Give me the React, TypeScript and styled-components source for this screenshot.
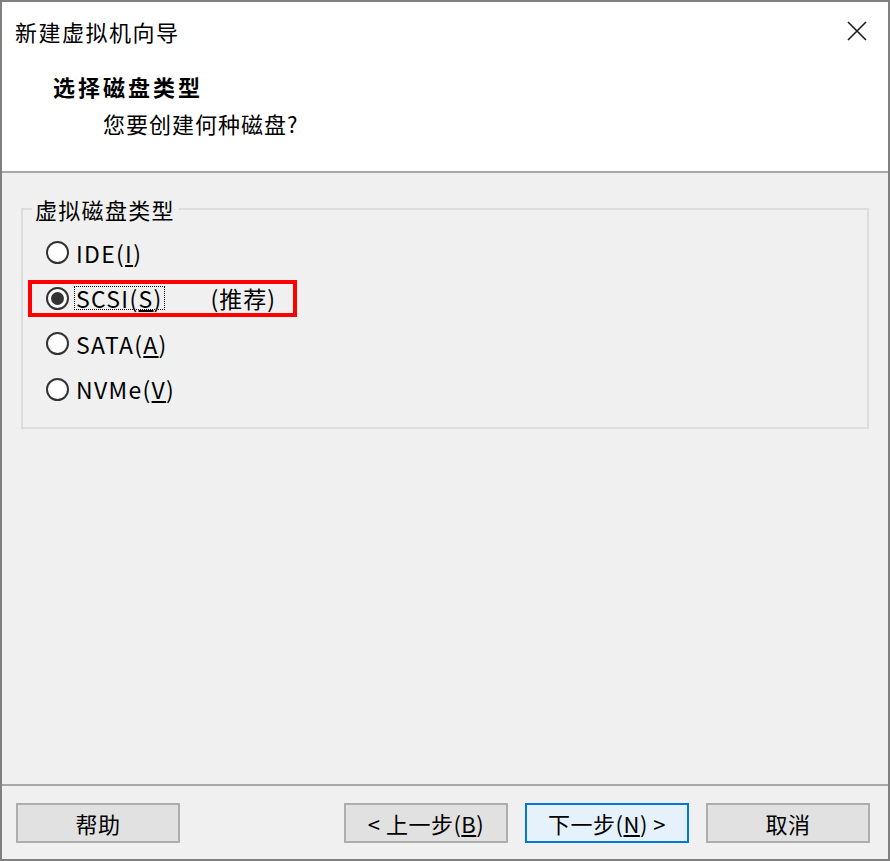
import React from 'react';
import styled, { createGlobalStyle } from 'styled-components';

const GlobalStyle = createGlobalStyle`
    html, body {
        margin: 0;
        padding: 0;
        background: #ffffff;
    }

    *, *::before, *::after {
        box-sizing: border-box;
    }
`;

const fontStack = `"Noto Sans CJK SC", "Noto Sans", sans-serif`;

    // Window frame
const StyledWindow = styled.div`
    display: flex;
    flex-direction: column;
    width: 890px;
    height: 861px;
    border: 2px solid #808080;
    font-family: ${fontStack};
    font-size: 22px;
    color: #000;
    background: #f0f0f0;
`;

const StyledHeader = styled.header`
    display: flex;
    flex-direction: column;
    height: 171px;
    background: #ffffff;
    border-bottom: 2px solid #a8a8a8;
`;

const StyledTitleBar = styled.div`
    display: flex;
    align-items: center;
    justify-content: space-between;
    height: 58px;
    padding: 0 16px 0 13px;
`;

const StyledTitle = styled.span`
    font-size: 22px;
    letter-spacing: 1.5px;
`;

const StyledCloseButton = styled.button`
    display: flex;
    align-items: center;
    justify-content: center;
    width: 30px;
    height: 30px;
    padding: 0;
    border: none;
    background: transparent;
    cursor: pointer;
`;

const StyledHeading = styled.h1`
    margin: 11px 0 0 51px;
    font-size: 22px;
    font-weight: 700;
    line-height: 30px;
    letter-spacing: 3px;
`;

const StyledSubHeading = styled.p`
    margin: 7px 0 0 101px;
    font-size: 22px;
    line-height: 30px;
    letter-spacing: 1px;
`;

    // Body
const StyledBody = styled.main`
    flex: 1;
    padding: 21px 19px 0 19px;
    border-bottom: 2px solid #a8a8a8;
`;

const StyledGroup = styled.fieldset`
    margin: 0;
    height: 235px;
    padding: 6px 0 0 23px;
    border: 2px solid #dcdcdc;
    display: flex;
    flex-direction: column;
`;

const StyledLegend = styled.legend`
    padding: 0 4px 0 3px;
    margin-left: -14px;
    font-size: 22px;
    line-height: 30px;
    letter-spacing: 1.3px;
`;

interface RadioRowProps {
    highlighted?: boolean
}

const StyledRadioRow = styled.label<RadioRowProps>`
    position: relative;
    display: flex;
    align-items: center;
    height: 45.5px;
    cursor: pointer;

    ${({highlighted}) => highlighted ? `
        &::after {
            content: '';
            position: absolute;
            left: -18px;
            top: 4px;
            width: 269px;
            height: 37px;
            border: 4px solid #ff0000;
            pointer-events: none;
        }
    ` : ''}
`;

interface RadioCircleProps {
    checked?: boolean
}

const StyledRadioCircle = styled.span<RadioCircleProps>`
    display: flex;
    align-items: center;
    justify-content: center;
    width: 23px;
    height: 23px;
    border: 2px solid #333333;
    border-radius: 50%;
    background: #ffffff;
    flex-shrink: 0;

    &::before {
        content: '';
        display: ${({checked}) => checked ? 'block' : 'none'};
        width: 13px;
        height: 13px;
        border-radius: 50%;
        background: #333333;
    }
`;

interface RadioLabelProps {
    focused?: boolean
}

const StyledRadioLabel = styled.span<RadioLabelProps>`
    margin-left: 5px;
    padding: 0 1px;
    font-size: 23px;
    line-height: 22px;
    border: 1px dotted ${({focused}) => focused ? '#000' : 'transparent'};
    letter-spacing: 1.3px;
`;

const StyledRecommend = styled.span`
    margin-left: 46px;
    font-size: 23px;
    letter-spacing: 1px;
`;

    // Footer
const StyledFooter = styled.footer`
    display: flex;
    align-items: center;
    height: 73px;
    padding: 0 18px 0 14px;
`;

const StyledSpacer = styled.div`
    flex: 1;
`;

interface ButtonProps {
    primary?: boolean
}

const StyledButton = styled.button<ButtonProps>`
    width: 164px;
    height: 40px;
    margin-left: ${({primary}) => primary ? '17px' : '0'};
    margin-right: ${({primary}) => primary ? '17px' : '0'};
    padding: 0;
    font-family: ${fontStack};
    font-size: 22px;
    color: #000;
    background: ${({primary}) => primary ? '#e5f1fb' : '#e1e1e1'};
    border: 2px solid ${({primary}) => primary ? '#0078d7' : '#adadad'};
    cursor: pointer;
    letter-spacing: 0.5px;
`;

const radioOptions = [
    { id: 'ide', text: 'IDE(', key: 'I', checked: false },
    { id: 'scsi', text: 'SCSI(', key: 'S', checked: true },
    { id: 'sata', text: 'SATA(', key: 'A', checked: false },
    { id: 'nvme', text: 'NVMe(', key: 'V', checked: false },
];

const CloseIcon = () => (
    <svg width="20" height="20" viewBox="0 0 20 20">
        <path d="M1 1 L19 19 M19 1 L1 19" stroke="#1a1a1a" strokeWidth="1.6" fill="none" />
    </svg>
);

export default function App() {
    return (
        <>
            <GlobalStyle />
            <StyledWindow>
                <StyledHeader>
                    <StyledTitleBar>
                        <StyledTitle>新建虚拟机向导</StyledTitle>
                        <StyledCloseButton aria-label="关闭">
                            <CloseIcon />
                        </StyledCloseButton>
                    </StyledTitleBar>
                    <StyledHeading>选择磁盘类型</StyledHeading>
                    <StyledSubHeading>您要创建何种磁盘?</StyledSubHeading>
                </StyledHeader>

                <StyledBody>
                    <StyledGroup>
                        <StyledLegend>虚拟磁盘类型</StyledLegend>
                        {radioOptions.map(option => (
                            <StyledRadioRow key={option.id} highlighted={option.checked}>
                                <StyledRadioCircle checked={option.checked} />
                                <StyledRadioLabel focused={option.checked}>
                                    {option.text}<u>{option.key}</u>)
                                </StyledRadioLabel>
                                {option.checked && <StyledRecommend>(推荐)</StyledRecommend>}
                            </StyledRadioRow>
                        ))}
                    </StyledGroup>
                </StyledBody>

                <StyledFooter>
                    <StyledButton>帮助</StyledButton>
                    <StyledSpacer />
                    <StyledButton>&lt; 上一步(<u>B</u>)</StyledButton>
                    <StyledButton primary>下一步(<u>N</u>) &gt;</StyledButton>
                    <StyledButton>取消</StyledButton>
                </StyledFooter>
            </StyledWindow>
        </>
    );
}
